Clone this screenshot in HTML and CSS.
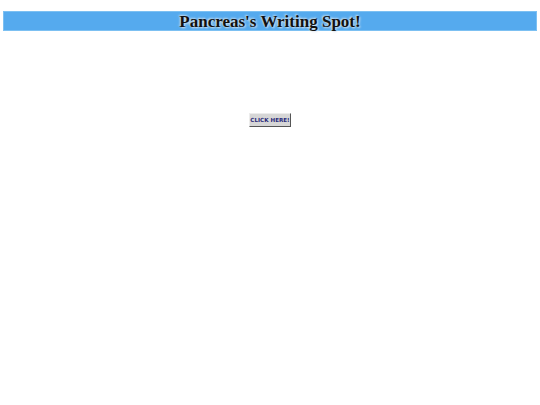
FILE: index.html
```html
<!DOCTYPE html>
<html>
<head>
<meta charset="utf-8">
<link rel="stylesheet" href="styles.css">
</head>
<body>
<header class="banner"><h1 class="title">Pancreas's Writing Spot!</h1></header>
<main class="center">
<a class="click-btn" href="#">CLICK HERE!</a>
</main>
</body>
</html>
```
FILE: styles.css
```css
html, body { margin: 0; padding: 0; background: #ffffff; }
body { padding: 11px 3px 0 3px; font-family: "Liberation Serif", "Times New Roman", serif; }
.banner {
  background: #55aaee;
  border: 1px solid #7cc0f2;
  height: 18px;
  display: flex;
  align-items: center;
  justify-content: center;
}
.title {
  margin: 0;
  padding-top: 1px;
  font-size: 17px;
  font-weight: bold;
  color: #111111;
  line-height: 18px;
  text-shadow: 1px 1px 2px #dde6ee, -1px -1px 2px #cfe0ee;
}
.center {
  display: flex;
  justify-content: center;
  padding-top: 82px;
}
.click-btn {
  display: block;
  width: 40px;
  height: 12px;
  background: #d6d6d6;
  border: 1px solid #ececec;
  border-right-color: #555555;
  border-bottom-color: #555555;
  color: #2a2a7a;
  font-family: "DejaVu Sans", sans-serif;
  font-size: 5.6px;
  font-weight: bold;
  line-height: 12px;
  text-align: center;
  text-decoration: none;
}
```
